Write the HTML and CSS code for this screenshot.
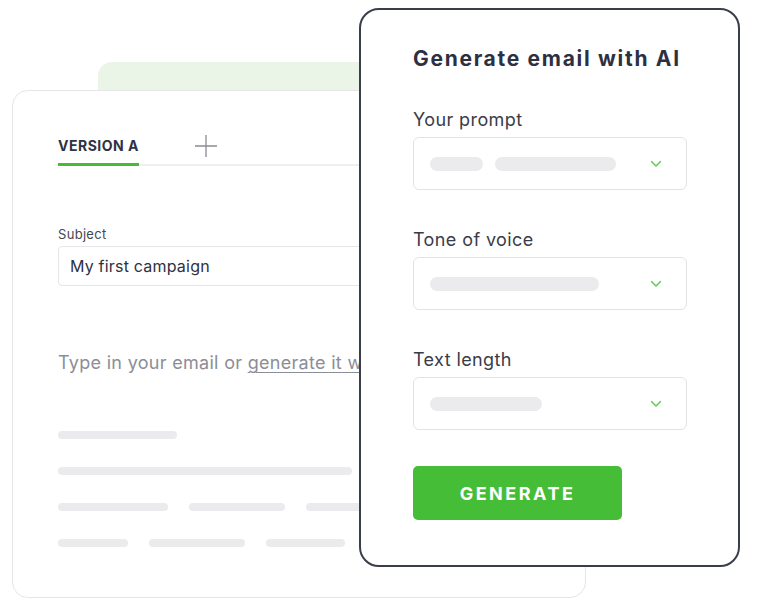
FILE: index.html
```html
<!DOCTYPE html>
<html lang="en">
<head>
  <meta charset="UTF-8" />
  <title>Generate email with AI</title>
  <link rel="stylesheet" href="styles.css">
</head>
<body>
  <div class="stage">
    <div class="back-card"></div>

    <div class="main-card">
      <div class="tabs">
        <div class="tab active">VERSION A</div>
        <svg class="plus" width="22" height="22" viewBox="0 0 22 22">
          <path d="M11 0v22M0 11h22" stroke="#8a8c94" stroke-width="1.3" fill="none" />
        </svg>
      </div>

      <div class="field-label">Subject</div>
      <div class="subject-input">My first campaign</div>

      <p class="placeholder">Type in your email or <span class="link">generate it with AI</span></p>

      <div class="skeleton">
        <div class="sk-row"><span class="bar" style="width:119px"></span></div>
        <div class="sk-row"><span class="bar" style="width:294px"></span></div>
        <div class="sk-row">
          <span class="bar" style="width:110px"></span>
          <span class="bar" style="width:96px"></span>
          <span class="bar" style="width:96px"></span>
        </div>
        <div class="sk-row">
          <span class="bar" style="width:70px"></span>
          <span class="bar" style="width:96px"></span>
          <span class="bar" style="width:79px"></span>
        </div>
      </div>
    </div>

    <div class="ai-card">
      <h2>Generate email with AI</h2>

      <label class="ai-label">Your prompt</label>
      <div class="select">
        <span class="pill" style="width:53px"></span>
        <span class="pill" style="width:121px"></span>
        <svg class="chev" width="12" height="8" viewBox="0 0 12 8"><path d="M1.5 1.5l4.5 4.5 4.5-4.5" stroke="#62cc55" stroke-width="1.5" fill="none" stroke-linecap="round" stroke-linejoin="round" /></svg>
      </div>

      <label class="ai-label">Tone of voice</label>
      <div class="select">
        <span class="pill" style="width:169px"></span>
        <svg class="chev" width="12" height="8" viewBox="0 0 12 8"><path d="M1.5 1.5l4.5 4.5 4.5-4.5" stroke="#62cc55" stroke-width="1.5" fill="none" stroke-linecap="round" stroke-linejoin="round" /></svg>
      </div>

      <label class="ai-label">Text length</label>
      <div class="select">
        <span class="pill" style="width:112px"></span>
        <svg class="chev" width="12" height="8" viewBox="0 0 12 8"><path d="M1.5 1.5l4.5 4.5 4.5-4.5" stroke="#62cc55" stroke-width="1.5" fill="none" stroke-linecap="round" stroke-linejoin="round" /></svg>
      </div>

      <button class="generate">GENERATE</button>
    </div>
  </div>
</body>
</html>
```

FILE: styles.css
```css
body {
  margin: 0;
  background: #ffffff;
  font-family: 'Inter', 'Noto Sans', sans-serif;
  color: #2e3142;
}

.stage {
  position: relative;
  width: 768px;
  height: 600px;
  overflow: hidden;
}

/* cards stacked on a free canvas */
.back-card {
  position: absolute;
  left: 98px;
  top: 62px;
  width: 400px;
  height: 120px;
  background: #eaf5e7;
  border-radius: 14px;
}

.main-card {
  position: absolute;
  left: 12px;
  top: 90px;
  width: 574px;
  height: 508px;
  box-sizing: border-box;
  background: #ffffff;
  border: 1px solid #e6e6e8;
  border-radius: 16px;
  padding: 47px 0 0 45px;
  overflow: hidden;
}

.tabs {
  display: flex;
  align-items: flex-start;
  width: 460px;
  border-bottom: 2px solid #efeff1;
}

.tab {
  font-size: 14px;
  line-height: 16px;
  font-weight: 700;
  letter-spacing: 0.5px;
  color: #2f3242;
  padding-bottom: 9px;
}

.tab.active {
  border-bottom: 3px solid #46bb36;
  margin-bottom: -2px;
}

.plus {
  margin-left: 56px;
  margin-top: -3px;
}

.field-label {
  margin-top: 60px;
  font-size: 13px;
  line-height: 16px;
  letter-spacing: 0.3px;
  color: #45474f;
}

.subject-input {
  margin-top: 4px;
  width: 440px;
  height: 40px;
  box-sizing: border-box;
  border: 1px solid #e6e6e8;
  border-radius: 4px;
  padding: 0 11px;
  display: flex;
  align-items: center;
  font-size: 16px;
  letter-spacing: 0.2px;
  color: #2e3142;
}

.placeholder {
  margin: 65px 0 0;
  font-size: 18px;
  line-height: 24px;
  letter-spacing: 0.3px;
  color: #8b8e97;
  white-space: nowrap;
}

.link {
  text-decoration: underline;
  text-underline-offset: 3px;
  text-decoration-thickness: 1px;
}

.skeleton {
  margin-top: 56px;
  display: flex;
  flex-direction: column;
  gap: 28px;
}

.sk-row {
  display: flex;
  gap: 21px;
}

.bar {
  display: block;
  height: 8px;
  border-radius: 4px;
  background: #ebebee;
}

.ai-card {
  position: absolute;
  left: 359px;
  top: 8px;
  width: 381px;
  height: 559px;
  box-sizing: border-box;
  background: #ffffff;
  border: 2px solid #3a3d4c;
  border-radius: 20px;
  padding: 35px 0 0 52px;
  display: flex;
  flex-direction: column;
  align-items: flex-start;
}

.ai-card h2 {
  margin: 0;
  font-size: 21px;
  line-height: 28px;
  font-weight: 700;
  letter-spacing: 1.7px;
  color: #2d3041;
}

.ai-label {
  margin-top: 35px;
  font-size: 18px;
  line-height: 24px;
  letter-spacing: 0.4px;
  color: #3a3c48;
}

.select ~ .ai-label {
  margin-top: 38px;
}

.select {
  margin-top: 5px;
  width: 274px;
  height: 53px;
  box-sizing: border-box;
  border: 1px solid #e3e3e6;
  border-radius: 6px;
  padding: 0 24px 0 16px;
  display: flex;
  align-items: center;
  gap: 12px;
}

.pill {
  display: block;
  height: 14px;
  border-radius: 7px;
  background: #ebebee;
}

.chev {
  margin-left: auto;
}

.generate {
  margin-top: 36px;
  width: 209px;
  height: 54px;
  border: none;
  border-radius: 5px;
  background: #46bd36;
  color: #ffffff;
  font-family: inherit;
  font-size: 18px;
  font-weight: 700;
  letter-spacing: 2.5px;
  cursor: pointer;
}
```
